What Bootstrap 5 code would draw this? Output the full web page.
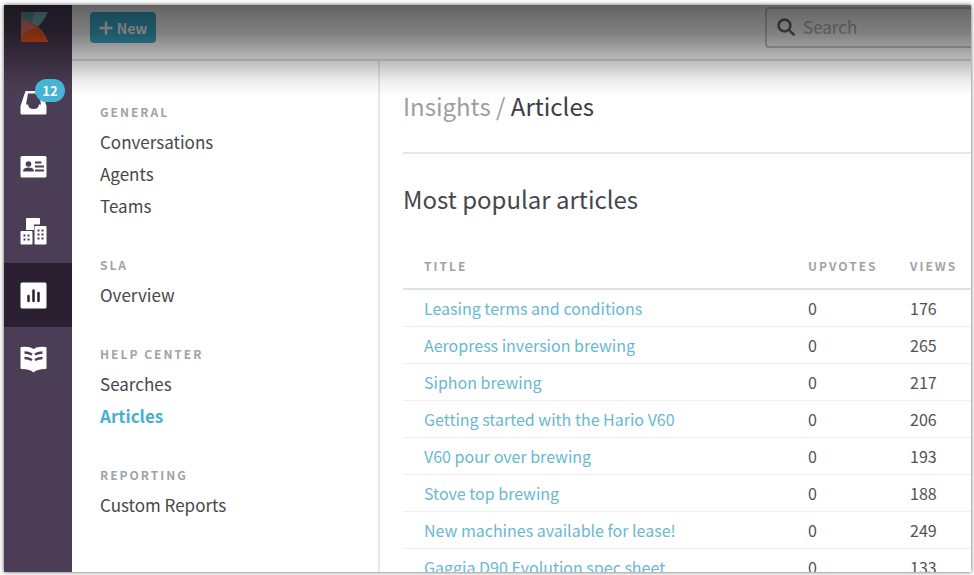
<!DOCTYPE html>
<html lang="en">
<head>
<meta charset="utf-8">
<meta name="viewport" content="width=device-width, initial-scale=1">
<title>Insights / Articles</title>
<link href="https://cdn.jsdelivr.net/npm/bootstrap@5.3.0/dist/css/bootstrap.min.css" rel="stylesheet">
<style>
  body { font-family: "Noto Sans CJK JP", "Noto Sans CJK SC", sans-serif; font-size: 16px; color: #45474a; background: #fdfdfd; padding: 5px 3px 3px 4px; }
  .app-frame { box-shadow: 0 0 4px rgba(0,0,0,.65); background: #fff; }
  .top-shade { height: 92px; pointer-events: none; z-index: 3;
    background: linear-gradient(rgba(0,0,0,.61), rgba(0,0,0,.5) 30%, rgba(0,0,0,.27) 60%, rgba(0,0,0,.06) 84%, rgba(0,0,0,0)); }
  .rail { width: 68px; background: #4b3d55; }
  .rail-logo { height: 66px; padding: 6px 0 0 16px; }
  .rail-item { height: 64px; padding-left: 16px; color: #fff; }
  .rail-item.active { background: #2b1f32; }
  .count { top: 8px; left: 31px; width: 30px; height: 23px; background: #45b4d5; font-size: 13px; line-height: 23px; z-index: 4; }
  .top-bar { height: 56px; border-bottom: 2px solid #dfe1e3; padding-left: 18px; }
  .btn-new { background: #3db1d3; color: #fff; width: 66px; height: 31px; font-size: 14px; font-weight: 700; line-height: 20px; border-radius: 4px; margin-top: 7px; }
  .search-box { width: 206px; height: 41px; margin-top: 2px; border: 2px solid #c9cbce; border-right: 0; border-radius: 4px 0 0 4px; padding: 0 0 2px 10px; gap: 8px; }
  .search-box input { font-size: 17px; line-height: 24px; color: #555; }
  .search-box input::placeholder { color: #b4b6b9; opacity: 1; }
  .sub-menu { width: 308px; border-right: 2px solid #e6e7e9; padding: 36px 0 0 28px; }
  .sub-menu section { margin-bottom: 28px; }
  .cap-label { font-size: 12px; line-height: 29px; letter-spacing: 2px; font-weight: 700; color: #a0a3a7; }
  .sub-menu a { font-size: 17px; line-height: 32px; color: #45474a; }
  .sub-menu a.current { color: #45b0d0; font-weight: 700; }
  .main-area { padding-left: 23px; }
  .page-title { font-size: 24px; line-height: 36px; padding: 27px 0 28px; border-bottom: 2px solid #e6e7e9; color: #9b9ea2; }
  .page-title span { color: #3c3e41; }
  .section-title { font-size: 24px; line-height: 36px; padding: 27px 0; }
  .table.articles { color: #505256; }
  .articles th, .articles td { padding: 0 0 0 21px; background: transparent; }
  .articles thead th { line-height: 44px; border-bottom: 2px solid #dfe1e3; }
  .articles td { font-size: 16px; line-height: 36px; border-bottom: 1px solid #eeeff0; }
  .articles td a { color: #68b8d2; }
  .w-up { width: 102px; }
  .w-views { width: 82px; }
</style>
<script src="https://cdn.jsdelivr.net/npm/bootstrap@5.3.0/dist/js/bootstrap.bundle.min.js"></script>
</head>
<body class="vh-100 overflow-hidden">
<div class="app-frame d-flex h-100 position-relative overflow-hidden">
  <div class="top-shade position-absolute top-0 start-0 w-100"></div>

  <nav class="rail flex-shrink-0" aria-label="Main">
    <div class="rail-logo">
      <svg width="28" height="32" viewBox="0 0 28 32" aria-hidden="true">
        <path d="M1 1h27C25 8 21 13 16 17L1 8z" fill="#7ab8b8"/>
        <path d="M1 1h13C14 7 12 11 9 14L1 8z" fill="#5a9ba0"/>
        <path d="M1 7.500c13 3 23 11 27 23.500H1z" fill="#e8643c"/>
        <path d="M1 7.500c6 2 11 5 15 9.500C10 19 4 22 1 26z" fill="#e87478"/>
        <path d="M1 31v-5c4-5 9-8 15-9 6 4 10 9 12 14z" fill="#f4571c"/>
      </svg>
    </div>
    <a class="rail-item d-flex align-items-center position-relative" href="#" aria-label="Inbox, 12 unread">
      <svg width="28" height="24" viewBox="0 0 28 24" aria-hidden="true"><path fill="currentColor" fill-rule="evenodd" d="M5.500 0h16l5 15v7q0 1.500-1.500 1.500h-23Q.5 23.500.5 22v-7zM8 2.500 6 13.500h2q.5 4.500 5.500 4.500t5.500-4.500h2L19 2.500z"/></svg>
      <span class="count position-absolute rounded-pill text-center fw-bold">12</span>
    </a>
    <a class="rail-item d-flex align-items-center" href="#" aria-label="Contacts">
      <svg width="28" height="22" viewBox="0 0 28 22" aria-hidden="true"><rect x="0.500" y="0" width="26" height="21.500" rx="1.500" fill="currentColor"/><g fill="#4b3d55"><circle cx="8.500" cy="8" r="2.800"/><path d="M3 15.500q0-4 5.500-4t5.500 4zM15 5.500h6.500v2H15zM15 9.500h9v2h-9zM15 13.500h9v2h-9z"/></g></svg>
    </a>
    <a class="rail-item d-flex align-items-center" href="#" aria-label="Companies">
      <svg width="28" height="27" viewBox="0 0 28 27" aria-hidden="true"><g fill="currentColor"><path d="M7 0h12q1 0 1 1v5.500h-6V12H6V1q0-1 1-1z"/><rect x="0.500" y="13" width="12" height="13.500" rx="1"/><rect x="14.500" y="8" width="12" height="18.500" rx="1"/></g><g fill="#4b3d55"><path d="M3.500 16.500h2v2h-2zM7.500 16.500h2v2h-2zM3.500 20.500h2v2h-2zM7.500 20.500h2v2h-2zM17.500 11.500h2v2h-2zM21.500 11.500h2v2h-2zM17.500 15.500h2v2h-2zM21.500 15.500h2v2h-2zM17.500 19.500h2v2h-2zM21.500 19.500h2v2h-2z"/></g></svg>
    </a>
    <a class="rail-item active d-flex align-items-center" href="#" aria-label="Insights" aria-current="page">
      <svg width="28" height="27" viewBox="0 0 28 27" aria-hidden="true"><rect x="0.500" y="0.500" width="26" height="26" rx="1.500" fill="currentColor"/><path stroke="#2b1f32" stroke-width="2.500" stroke-linecap="round" d="M8.500 14v5M13.500 8.500V19M18.500 11v8"/></svg>
    </a>
    <a class="rail-item d-flex align-items-center" href="#" aria-label="Knowledge base">
      <svg width="28" height="27" viewBox="0 0 28 27" aria-hidden="true"><path fill="currentColor" d="M1.500 1q8-1 12 2 4-3 12-2 1 0 1 1v20q0 1-1 1-9 0-12 3.500-3-3.500-12-3.500-1 0-1-1V2q0-1 1-1z"/><path fill="none" stroke="#4b3d55" stroke-width="2.400" d="M4.500 6.500q4 0 7.500 2M4.500 12q4 0 7.500 2M15 8.500q3.500-2 7.500-2M15 14q3.500-2 7.500-2"/></svg>
    </a>
  </nav>

  <div class="d-flex flex-column flex-grow-1">
    <header class="top-bar d-flex justify-content-between align-items-start flex-shrink-0">
      <button type="button" class="btn btn-new d-flex align-items-center justify-content-center gap-1 p-0 border-0">
        <svg width="14" height="14" viewBox="0 0 14 14" aria-hidden="true"><path stroke="currentColor" stroke-width="2.400" d="M7 0.500v13M0.500 7h13"/></svg>
        New
      </button>
      <label class="search-box d-flex align-items-center">
        <svg class="flex-shrink-0" width="18" height="18" viewBox="0 0 18 18" fill="none" stroke="#6a6c6f" stroke-width="2.600" stroke-linecap="round" aria-hidden="true"><circle cx="7.500" cy="7.500" r="5.900"/><path d="m12.200 12.200 4.300 4.300"/></svg>
        <input type="search" class="form-control border-0 bg-transparent shadow-none p-0" placeholder="Search" aria-label="Search">
      </label>
    </header>

    <div class="d-flex flex-grow-1">
      <nav class="sub-menu flex-shrink-0" aria-label="Insights">
        <section>
          <h2 class="cap-label m-0">GENERAL</h2>
          <a class="d-block text-decoration-none" href="#">Conversations</a>
          <a class="d-block text-decoration-none" href="#">Agents</a>
          <a class="d-block text-decoration-none" href="#">Teams</a>
        </section>
        <section>
          <h2 class="cap-label m-0">SLA</h2>
          <a class="d-block text-decoration-none" href="#">Overview</a>
        </section>
        <section>
          <h2 class="cap-label m-0">HELP CENTER</h2>
          <a class="d-block text-decoration-none" href="#">Searches</a>
          <a class="d-block text-decoration-none current" href="#" aria-current="page">Articles</a>
        </section>
        <section>
          <h2 class="cap-label m-0">REPORTING</h2>
          <a class="d-block text-decoration-none" href="#">Custom Reports</a>
        </section>
      </nav>

      <main class="main-area flex-grow-1">
        <h1 class="page-title fw-normal m-0"><a class="text-reset text-decoration-none" href="#">Insights</a> / <span>Articles</span></h1>
        <h2 class="section-title fw-normal m-0">Most popular articles</h2>
        <table class="table articles m-0">
          <thead>
            <tr><th class="cap-label" scope="col">TITLE</th><th class="cap-label w-up" scope="col">UPVOTES</th><th class="cap-label w-views" scope="col">VIEWS</th></tr>
          </thead>
          <tbody>
            <tr><td><a class="text-decoration-none" href="#">Leasing terms and conditions</a></td><td>0</td><td>176</td></tr>
            <tr><td><a class="text-decoration-none" href="#">Aeropress inversion brewing</a></td><td>0</td><td>265</td></tr>
            <tr><td><a class="text-decoration-none" href="#">Siphon brewing</a></td><td>0</td><td>217</td></tr>
            <tr><td><a class="text-decoration-none" href="#">Getting started with the Hario V60</a></td><td>0</td><td>206</td></tr>
            <tr><td><a class="text-decoration-none" href="#">V60 pour over brewing</a></td><td>0</td><td>193</td></tr>
            <tr><td><a class="text-decoration-none" href="#">Stove top brewing</a></td><td>0</td><td>188</td></tr>
            <tr><td><a class="text-decoration-none" href="#">New machines available for lease!</a></td><td>0</td><td>249</td></tr>
            <tr><td><a class="text-decoration-none" href="#">Gaggia D90 Evolution spec sheet</a></td><td>0</td><td>133</td></tr>
          </tbody>
        </table>
      </main>
    </div>
  </div>
</div>
</body>
</html>
